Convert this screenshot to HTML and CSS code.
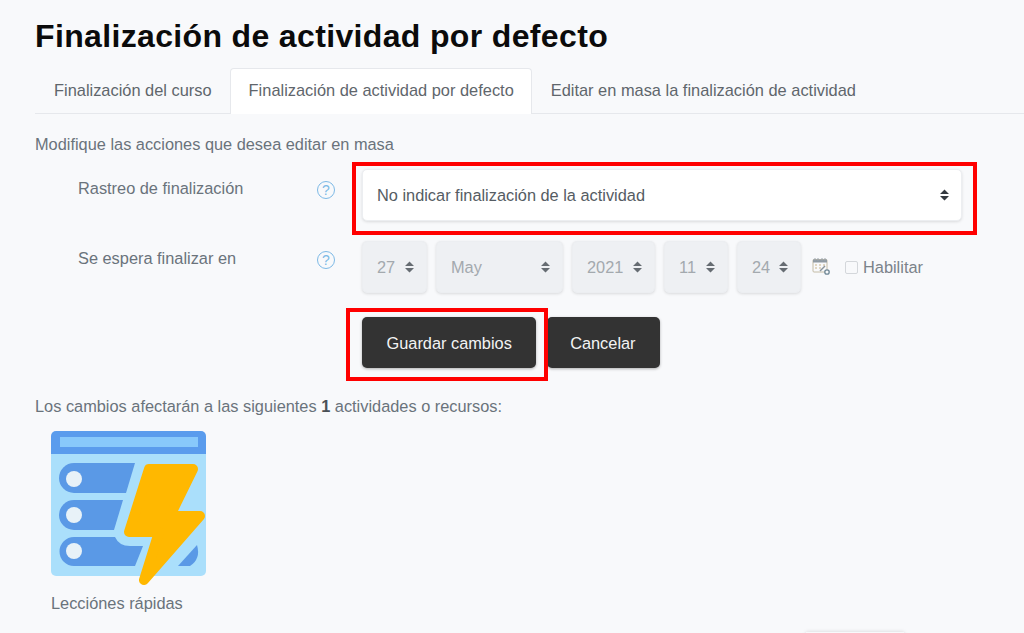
FILE: index.html
```html
<!DOCTYPE html>
<html lang="es">
<head>
  <meta charset="UTF-8" />
  <title>Finalización de actividad por defecto</title>
  <link rel="stylesheet" href="styles.css">
</head>
<body>
  <div class="page">
    <h1>Finalización de actividad por defecto</h1>

    <div class="tabs">
      <a class="tab">Finalización del curso</a>
      <a class="tab active">Finalización de actividad por defecto</a>
      <a class="tab">Editar en masa la finalización de actividad</a>
    </div>

    <p class="intro">Modifique las acciones que desea editar en masa</p>

    <div class="form-row first">
      <label class="form-label">Rastreo de finalización</label>
      <span class="help">?</span>
      <select class="select wide">
        <option>No indicar finalización de la actividad</option>
      </select>
    </div>

    <div class="form-row date-row">
      <label class="form-label">Se espera finalizar en</label>
      <span class="help">?</span>
      <div class="date-group">
        <select class="select day" disabled><option>27</option></select>
        <select class="select month" disabled><option>May</option></select>
        <select class="select year" disabled><option>2021</option></select>
        <select class="select short" disabled><option>11</option></select>
        <select class="select short" disabled><option>24</option></select>
        <svg class="calendar" width="18" height="18" viewBox="0 0 18 18" fill="none">
          <rect x="1" y="2.500" width="14" height="12.500" rx="1" stroke="#c4bca6"/>
          <rect x="1" y="2.500" width="14" height="3" fill="#8f9aa3"/>
          <path d="M3 1v3M6 1v3M10 1v3M13 1v3" stroke="#9aa3aa"/>
          <path d="M3 8h2M7 8h2M11 8h2M3 11h2M7 11h2" stroke="#c9b58a"/>
          <path d="M8 14l5-5" stroke="#8a949c" stroke-width="1.400"/>
          <circle cx="15" cy="15" r="2.200" fill="#f8f9fb" stroke="#6f8796" stroke-width="1.300"/>
        </svg>
        <label class="enable"><input type="checkbox" disabled> Habilitar</label>
      </div>
    </div>

    <div class="actions">
      <button class="btn">Guardar cambios</button>
      <button class="btn cancel">Cancelar</button>
    </div>

    <p class="notice">Los cambios afectarán a las siguientes <strong>1</strong> actividades o recursos:</p>

    <div class="activity">
      <svg width="155" height="156" viewBox="0 0 155 156">
        <path d="M0 23H155V140a5 5 0 0 1-5 5H5a5 5 0 0 1-5-5Z" fill="#aadffb"/>
        <path d="M5 0H150a5 5 0 0 1 5 5V23H0V5a5 5 0 0 1 5-5Z" fill="#5a9ced"/>
        <rect x="9" y="6" width="138" height="10" fill="#88c9fb"/>
        <path d="M23 32H84L75 62H23a15 15 0 0 1 0-30Z" fill="#5a99e6"/>
        <path d="M23 69H72L63 99H23a15 15 0 0 1 0-30Z" fill="#5a99e6"/>
        <path d="M23 106H64Q68 115 79 115H92L84 135H23a14.500 14.500 0 0 1 0-29Z" fill="#5a99e6"/>
        <path d="M146 114Q150 128 139 135H127Z" fill="#5a99e6"/>
        <circle cx="23" cy="48" r="8" fill="#e8f2f8"/>
        <circle cx="23" cy="84" r="8" fill="#e8f2f8"/>
        <circle cx="23" cy="120" r="8" fill="#e8f2f8"/>
        <polygon points="98,38 142,38 119,85 149,85 93,149 108,101 78,101" fill="#ffb800" stroke="#ffb800" stroke-width="10" stroke-linejoin="round"/>
      </svg>
      <span class="activity-name">Lecciónes rápidas</span>
    </div>

    <!-- red annotation boxes drawn over the screenshot -->
    <div class="mark mark-select"></div>
    <div class="mark mark-save"></div>
    <div class="cut-off"></div>
  </div>
</body>
</html>
```

FILE: styles.css
```css
body {
  margin: 0;
  background: #f8f9fb;
  font-family: "Liberation Sans", Arial, sans-serif;
  font-size: 16.35px;
  color: #6a737b;
}

.page {
  position: relative;
  height: 633px;
  overflow: hidden;
  padding: 18px 0 0 35px;
  box-sizing: border-box;
}

h1 {
  margin: 0;
  font-size: 32px;
  line-height: 36px;
  font-weight: bold;
  letter-spacing: 0.35px;
  color: #0b0b0b;
}

.tabs {
  display: flex;
  margin-top: 14px;
  border-bottom: 1px solid #e6e8ec;
  height: 45px;
}

.tab {
  padding: 0 18px;
  line-height: 43px;
  font-size: 16.4px;
  color: #5f666c;
  border: 1px solid transparent;
  border-bottom: none;
}

.tab.active {
  background: #ffffff;
  border-color: #e6e8ec;
  border-radius: 4px 4px 0 0;
  height: 45px;
  margin-bottom: -1px;
  margin-left: -1px;
  padding-right: 17px;
}

.intro {
  margin: 20px 0 0;
  line-height: 20px;
}

.form-row {
  display: flex;
  align-items: flex-start;
  margin-top: 20px;
}

.form-row.first {
  margin-top: 15px;
}

.form-label {
  width: 239px;
  padding: 9px 0 0 43px;
  line-height: 20px;
}

.help {
  width: 16px;
  height: 16px;
  margin: 12px 27px 0 0;
  border: 1px solid #7db9e6;
  border-radius: 50%;
  color: #7db9e6;
  font-size: 14px;
  line-height: 16px;
  text-align: center;
}

.date-row .form-label {
  padding-top: 7px;
}

.date-row .help {
  margin-top: 10px;
}

.select {
  appearance: none;
  height: 52px;
  padding: 0 28px 0 14px;
  background-color: #ffffff;
  background-image: url("data:image/svg+xml,%3Csvg xmlns='http://www.w3.org/2000/svg' width='9' height='12'%3E%3Cpath d='M4.500 .5L9 5H0ZM4.500 11.500L0 7H9Z' fill='%23343a40'/%3E%3C/svg%3E");
  background-repeat: no-repeat;
  background-position: right 12px center;
  border: 1px solid #eceef1;
  border-radius: 5px;
  box-shadow: 0 1px 3px rgba(0, 0, 0, 0.12);
  font-family: inherit;
  font-size: inherit;
  color: #555c63;
  opacity: 1;
}

.select.wide {
  width: 600px;
}

.select:disabled {
  background-color: #eef0f3;
  color: #a3a9ae;
  background-image: url("data:image/svg+xml,%3Csvg xmlns='http://www.w3.org/2000/svg' width='9' height='12'%3E%3Cpath d='M4.500 .5L9 5H0ZM4.500 11.500L0 7H9Z' fill='%23666c72'/%3E%3C/svg%3E");
}

.date-group {
  display: flex;
  align-items: center;
  gap: 9px;
}

.day {
  width: 65px;
}

.month {
  width: 127px;
}

.year {
  width: 83px;
}

.short {
  width: 64px;
}

.calendar {
  margin: 0 0 2px 2px;
}

.enable {
  display: flex;
  align-items: center;
  gap: 5px;
  margin-left: 6px;
  color: #7b838a;
}

.enable input {
  appearance: none;
  width: 13px;
  height: 13px;
  margin: 0;
  border: 1px solid #d4d7db;
  border-radius: 2px;
  background: #f8f9fb;
}

.actions {
  display: flex;
  gap: 11px;
  margin: 24px 0 0 327px;
}

.btn {
  height: 51px;
  padding: 1px 24.5px 0;
  background: #333333;
  border: none;
  border-radius: 5px;
  box-shadow: 0 1px 3px rgba(0, 0, 0, 0.3);
  font-family: inherit;
  font-size: inherit;
  color: #f3f3f3;
}

.cancel {
  padding: 1px 24.5px 0 22.5px;
  width: 113px;
}

.notice {
  margin: 28px 0 0;
  line-height: 20px;
}

.notice strong {
  color: #4a5056;
}

.activity {
  display: flex;
  flex-direction: column;
  margin: 15px 0 0 16px;
}

.activity-name {
  margin-top: 6px;
  line-height: 20px;
}

.mark {
  position: absolute;
  box-sizing: border-box;
  border: 4px solid #ff0000;
}

.mark-select {
  left: 352px;
  top: 162px;
  width: 625px;
  height: 73px;
}

.mark-save {
  left: 346px;
  top: 308px;
  width: 202px;
  height: 73px;
}

.cut-off {
  position: absolute;
  left: 806px;
  top: 632px;
  width: 98px;
  height: 20px;
  box-shadow: 0 0 4px rgba(0, 0, 0, 0.15);
}
```
